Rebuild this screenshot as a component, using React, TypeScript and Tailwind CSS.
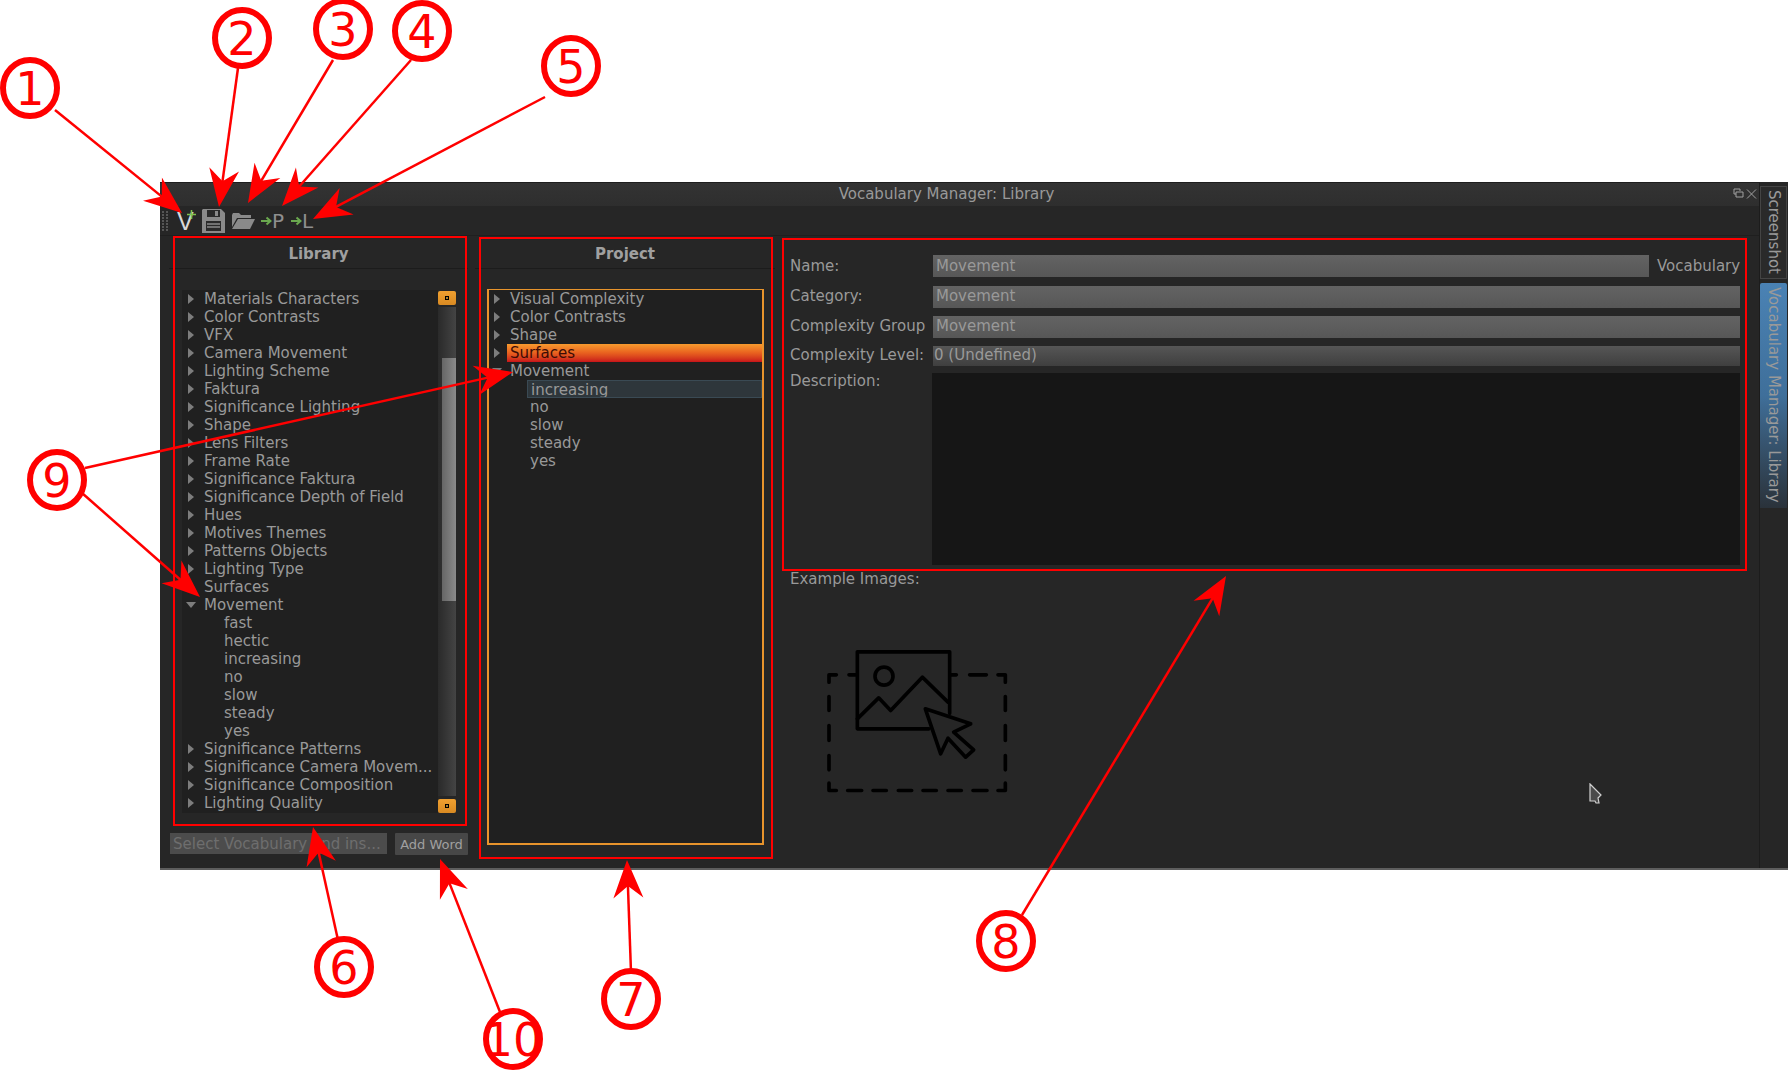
const libraryRows: [string, 'closed' | 'open' | 'leaf' | 'child'][] = [
  ['Materials Characters', 'closed'],
  ['Color Contrasts', 'closed'],
  ['VFX', 'closed'],
  ['Camera Movement', 'closed'],
  ['Lighting Scheme', 'closed'],
  ['Faktura', 'closed'],
  ['Significance Lighting', 'closed'],
  ['Shape', 'closed'],
  ['Lens Filters', 'closed'],
  ['Frame Rate', 'closed'],
  ['Significance Faktura', 'closed'],
  ['Significance Depth of Field', 'closed'],
  ['Hues', 'closed'],
  ['Motives Themes', 'closed'],
  ['Patterns Objects', 'closed'],
  ['Lighting Type', 'closed'],
  ['Surfaces', 'leaf'],
  ['Movement', 'open'],
  ['fast', 'child'],
  ['hectic', 'child'],
  ['increasing', 'child'],
  ['no', 'child'],
  ['slow', 'child'],
  ['steady', 'child'],
  ['yes', 'child'],
  ['Significance Patterns', 'closed'],
  ['Significance Camera Movem...', 'closed'],
  ['Significance Composition', 'closed'],
  ['Lighting Quality', 'closed'],
]

const projectRows: [string, 'closed' | 'open' | 'leaf' | 'child'][] = [
  ['Visual Complexity', 'closed'],
  ['Color Contrasts', 'closed'],
  ['Shape', 'closed'],
  ['Surfaces', 'closed'],
  ['Movement', 'open'],
  ['increasing', 'child'],
  ['no', 'child'],
  ['slow', 'child'],
  ['steady', 'child'],
  ['yes', 'child'],
]

const TreeRow = ({ label, kind, active }: { label: string; kind: string; active?: string }) => (
  <div className="flex h-[18px] items-center text-[#999999]">
    <div className={`flex shrink-0 items-center pl-[5px] ${kind === 'child' ? 'w-[38px]' : 'w-[18px]'}`}>
      {kind === 'closed' && (
        <svg width="6" height="10" viewBox="0 0 6 10">
          <polygon points="0,0 6,5 0,10" fill="#7d7d7d" />
        </svg>
      )}
      {kind === 'open' && (
        <svg width="10" height="6" viewBox="0 0 10 6" className="-ml-[2px]">
          <polygon points="0,0 10,0 5,6" fill="#7d7d7d" />
        </svg>
      )}
    </div>
    <div
      className={`h-[18px] flex-1 truncate pl-[3px] leading-[18px] ${
        active === 'current'
          ? 'bg-gradient-to-b from-[#f79a2e] via-[#e8601f] to-[#c8101a] text-[#3c0c06]'
          : active === 'selected'
            ? 'border border-[#3a4a54] bg-[#2e363b] pl-[2px] leading-[15px]'
            : ''
      }`}
    >
      {label}
    </div>
  </div>
)

const ScrollButton = () => (
  <div className="flex h-[14px] w-[18px] items-center justify-center rounded-[2px] bg-gradient-to-b from-[#f0a030] to-[#d98a22]">
    <div className="h-[4px] w-[4px] border border-black bg-[#b0802a]" />
  </div>
)

const Field = ({ label, value, level }: { label: string; value: string; level?: boolean }) => (
  <div className={`flex items-center ${level ? 'h-[20px]' : 'h-[22px]'}`}>
    <div className="w-[143px] shrink-0 text-[#999999]">{label}</div>
    <div
      className={`flex h-full flex-1 items-center text-[#999999] ${
        level ? 'bg-gradient-to-b from-[#565656] to-[#3f3f3f] pl-[1px]' : 'bg-gradient-to-b from-[#636363] to-[#575757] pl-[3px]'
      }`}
    >
      {value}
    </div>
  </div>
)

const Marker = ({ x, y, n }: { x: number; y: number; n: string }) => (
  <g>
    <ellipse cx={x} cy={y} rx="27" ry="28" fill="white" stroke="#ff0000" strokeWidth="6" />
    <text x={x} y={y + 17} textAnchor="middle" fontSize="46" fill="#ff0000" fontFamily="'DejaVu Sans', sans-serif">
      {n}
    </text>
  </g>
)

const Arrow = ({ from, to }: { from: [number, number]; to: [number, number] }) => {
  const dx = to[0] - from[0]
  const dy = to[1] - from[1]
  const len = Math.hypot(dx, dy)
  const ux = dx / len
  const uy = dy / len
  const point = (back: number, side: number) =>
    `${to[0] - ux * back - uy * side},${to[1] - uy * back + ux * side}`
  return (
    <g>
      <line x1={from[0]} y1={from[1]} x2={to[0] - ux * 20} y2={to[1] - uy * 20} stroke="#ff0000" strokeWidth="2.5" />
      <polygon points={`${to[0]},${to[1]} ${point(38, 15)} ${point(26, 0)} ${point(38, -15)}`} fill="#ff0000" />
    </g>
  )
}

const Annotations = () => (
  <svg width="1788" height="1070" viewBox="0 0 1788 1070" className="pointer-events-none absolute inset-0">
    <g fill="none" stroke="#ff0000" strokeWidth="2">
      <rect x="174" y="237" width="292" height="588" />
      <rect x="480" y="238" width="292" height="620" />
      <rect x="783" y="239" width="963" height="331" />
    </g>
    <Arrow from={[55, 110]} to={[182, 213]} />
    <Arrow from={[238, 68]} to={[219, 207]} />
    <Arrow from={[333, 60]} to={[248, 203]} />
    <Arrow from={[411, 60]} to={[282, 206]} />
    <Arrow from={[545, 97]} to={[313, 219]} />
    <Arrow from={[85, 468]} to={[513, 372]} />
    <Arrow from={[82, 493]} to={[200, 597]} />
    <Arrow from={[338, 940]} to={[313, 827]} />
    <Arrow from={[500, 1012]} to={[440, 859]} />
    <Arrow from={[631, 972]} to={[627, 860]} />
    <Arrow from={[1022, 915]} to={[1226, 576]} />
    <Marker x={30} y={88} n="1" />
    <Marker x={242} y={38} n="2" />
    <Marker x={343} y={29} n="3" />
    <Marker x={422} y={31} n="4" />
    <Marker x={571} y={66} n="5" />
    <Marker x={344} y={967} n="6" />
    <Marker x={631} y={999} n="7" />
    <Marker x={1006} y={941} n="8" />
    <Marker x={57} y={480} n="9" />
    <Marker x={513} y={1039} n="10" />
  </svg>
)

const GreenArrow = () => (
  <svg width="11" height="10" viewBox="0 0 11 10" className="shrink-0">
    <path d="M0 5H9M5.5 1.5 9.5 5 5.5 8.5" fill="none" stroke="#6aa84f" strokeWidth="2" />
  </svg>
)

const Toolbar = () => (
  <div className="flex h-[30px] items-center border-b border-[#1f1f1f] text-[#8f8f8f]">
    <div className="ml-[2px] grid w-[6px] grid-cols-2 gap-[1px]">
      {Array.from({ length: 14 }).map((_, i) => (
        <div key={i} className="h-[2px] w-[2px] bg-[#555555]" />
      ))}
    </div>
    <div className="relative ml-[9px] w-[18px] text-[25px] leading-[30px] text-[#d8d8d8]" style={{ fontFamily: "'Liberation Sans', sans-serif" }}>
      V
      <svg width="9" height="9" viewBox="0 0 9 9" className="absolute -right-[1px] top-[4px]">
        <path d="M4.5 0V9M0 4.5H9" stroke="#7fc14f" strokeWidth="1.6" />
      </svg>
    </div>
    <svg width="23" height="24" viewBox="0 0 23 24" className="ml-[7px]">
      <path d="M1 0H19L23 4V24H0V1Z" fill="#8a8a8a" />
      <rect x="5" y="1" width="13" height="7" fill="#2a2a2a" />
      <rect x="13" y="2" width="3" height="5" fill="#8a8a8a" />
      <rect x="4" y="12" width="15" height="10" fill="#2a2a2a" />
      <path d="M5 15H18M5 18H18" stroke="#8a8a8a" strokeWidth="1.4" />
    </svg>
    <svg width="23" height="16" viewBox="0 0 23 16" className="ml-[7px]">
      <path d="M0 2 1 0H7L9 2H19V5H5L0 14Z" fill="#8a8a8a" />
      <path d="M6 6H23L18 16H0Z" fill="#8a8a8a" />
    </svg>
    <div className="ml-[6px] flex w-[21px] items-center">
      <GreenArrow />
      <span className="text-[20px] leading-[30px]">P</span>
    </div>
    <div className="ml-[9px] flex w-[21px] items-center">
      <GreenArrow />
      <span className="text-[20px] leading-[30px]">L</span>
    </div>
  </div>
)

const LibraryPanel = () => (
  <div className="ml-[9px] flex w-[299px] shrink-0 flex-col">
    <div className="h-[33px] border-b border-[#1c1c1c] text-center font-bold leading-[36px] text-[#a0a0a0]">Library</div>
    <div className="ml-[13px] mt-[21px] flex h-[523px]">
      <div className="w-[256px] bg-[#202020] pl-[1px]">
        {libraryRows.map(([label, kind]) => (
          <TreeRow key={label} label={label} kind={kind} />
        ))}
      </div>
      <div className="flex w-[18px] flex-col pt-[1px]">
        <ScrollButton />
        <div className="mt-[2px] flex-1 bg-gradient-to-r from-[#2a2a2a] to-[#444444] pl-[4px]">
          <div className="mt-[51px] h-[243px] w-[14px] bg-gradient-to-r from-[#666666] to-[#8a8a8a]" />
        </div>
        <div className="mt-[3px]">
          <ScrollButton />
        </div>
      </div>
    </div>
    <div className="ml-[1px] mt-[20px] flex items-start">
      <div className="flex h-[21px] w-[217px] items-center truncate bg-[#4c4c4c] pl-[3px] pt-[1px] text-[#6e6e6e]">Select Vocabulary and ins...</div>
      <div className="ml-[8px] flex h-[22px] w-[73px] items-center justify-center rounded-[1px] bg-[#474747] pt-[1px] text-[13px] text-[#a0a0a0]">Add Word</div>
    </div>
  </div>
)

const ProjectPanel = () => (
  <div className="ml-[7px] flex w-[300px] shrink-0 flex-col">
    <div className="h-[33px] border-b border-[#1c1c1c] text-center font-bold leading-[36px] text-[#a0a0a0]">Project</div>
    <div className="ml-[12px] mt-[20px] h-[556px] w-[277px] border-x-2 border-b-2 border-t border-[#e8942c] bg-[#202020]">
      {projectRows.map(([label, kind]) => (
        <TreeRow
          key={label}
          label={label}
          kind={kind}
          active={label === 'Surfaces' ? 'current' : label === 'increasing' ? 'selected' : undefined}
        />
      ))}
    </div>
  </div>
)

const DropPlaceholder = () => (
  <svg width="190" height="147" viewBox="130 260 570 440" className="ml-[33px] mt-[57px]">
    <g fill="none" stroke="#000000" strokeWidth="11" strokeLinejoin="round" strokeLinecap="round">
      <path d="M170 343H148V365M148 408V450M148 495V540M148 585V628M148 668V690H170M204 690H246M280 690H320M356 690H396M430 690H470M505 690H545M580 690H622M655 690H677V668M677 628V585M677 540V495M677 450V408M677 365V343H655M620 343H570M530 343H512M228 343H208" />
      <path d="M448 505H233V274H510V458" />
      <circle cx="313" cy="347" r="27" />
      <path d="M233 475 297 412 333 450 428 350 505 425" />
      <path d="M437 445 573 490 522 515 582 568 558 590 505 533 483 580Z" />
    </g>
  </svg>
)

const FormPanel = () => (
  <div className="ml-[15px] flex w-[950px] flex-col pt-[19px]">
    <div className="flex flex-col gap-[8px]">
      <div className="flex items-center">
        <div className="flex-1">
          <Field label="Name:" value="Movement" />
        </div>
        <div className="ml-[8px] w-[83px] text-[#999999]">Vocabulary</div>
      </div>
      <Field label="Category:" value="Movement" />
      <Field label="Complexity Group" value="Movement" />
      <Field label="Complexity Level:" value="0 (Undefined)" level />
    </div>
    <div className="mt-[7px] flex">
      <div className="w-[142px] shrink-0 leading-[17px] text-[#999999]">Description:</div>
      <div className="h-[192px] w-[809px] bg-[#161616]" />
    </div>
    <div className="mt-[3px] text-[#999999]">Example Images:</div>
    <DropPlaceholder />
  </div>
)

const DockTabs = () => (
  <div className="flex w-[28px] flex-col border-l border-[#1c1c1c] pt-[4px] text-[#999999]">
    <div className="flex h-[93px] w-[27px] items-center justify-start border border-[#444444] bg-[#2a2a2a] pt-[3px] [writing-mode:vertical-rl]">Screenshot</div>
    <div className="mt-[4px] flex h-[225px] w-[27px] items-center justify-start rounded-t-[2px] bg-gradient-to-b from-[#4a82b4] via-[#3f6f9a] to-[#2a323a] pt-[4px] [writing-mode:vertical-rl]">
      Vocabulary Manager: Library
    </div>
  </div>
)

const MouseCursor = () => (
  <svg width="14" height="22" viewBox="0 0 14 22" className="absolute left-[1589px] top-[783px]">
    <path d="M1 1 12 12 9 15 10 20 7 20 6 18 1 18Z" fill="#4a4a4a" stroke="#d0d0d0" strokeWidth="1.2" />
  </svg>
)

export default function App() {
  return (
    <div className="relative h-[1070px] w-[1788px] overflow-hidden bg-white text-[15px]" style={{ fontFamily: "'DejaVu Sans', sans-serif" }}>
      <div className="pl-[160px] pt-[182px]">
        <div className="flex h-[688px] w-[1628px] border-b-2 border-[#5e5e5e] bg-[#262626]">
          <div className="flex w-[1599px] flex-col">
            <div className="h-[24px] border-t border-[#1e1e1e] bg-gradient-to-b from-[#333333] to-[#2e2e2e] pr-[26px] text-center leading-[22px] text-[#999999]">
              <div className="relative">
                Vocabulary Manager: Library
                <svg width="24" height="12" viewBox="0 0 24 12" className="absolute -right-[24px] top-[5px]">
                  <path d="M1 1H7V3M3 4H10V9H3Z M1 1V6H3" fill="none" stroke="#a0a0a0" strokeWidth="1" />
                  <path d="M14 1.5 23 10.5M23 1.5 14 10.5" stroke="#a0a0a0" strokeWidth="1" />
                </svg>
              </div>
            </div>
            <Toolbar />
            <div className="flex flex-1">
              <LibraryPanel />
              <ProjectPanel />
              <FormPanel />
            </div>
          </div>
          <DockTabs />
        </div>
      </div>
      <MouseCursor />
      <Annotations />
    </div>
  )
}
